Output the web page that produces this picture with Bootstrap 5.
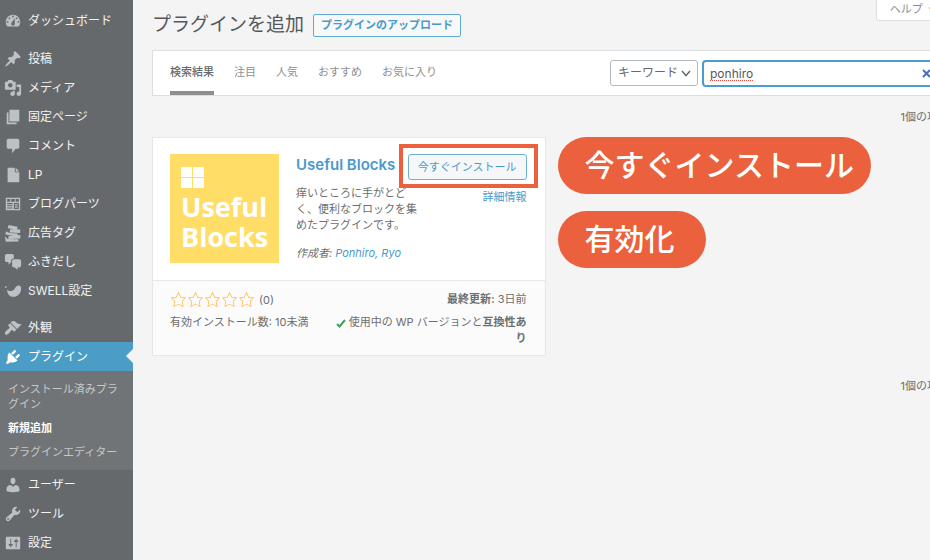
<!DOCTYPE html>
<html lang="ja">
<head>
<meta charset="utf-8">
<meta name="viewport" content="width=device-width, initial-scale=1">
<title>プラグインを追加</title>
<link href="https://cdn.jsdelivr.net/npm/bootstrap@5.3.0/dist/css/bootstrap.min.css" rel="stylesheet">
<style>
  body { font-family: Inter, "Noto Sans CJK JP", sans-serif; font-size: 11px; line-height: 16px; color: #6c6e70; background: #f4f4f4; }
  a { color: #4a9ac9; text-decoration: none; }
  .side { width: 133px; background: #65696c; padding-top: 6px; }
  .side .nav-link { height: 29px; padding: 0 0 0 4px; gap: 6px; font-size: 12px; color: #f2f3f4; }
  .side svg { width: 18px; height: 18px; fill: #bcc1c5; flex: none; }
  .side .gap-above { margin-top: 9px; }
  .side .gap-above-sm { margin-top: 8px; }
  .side .nav-link.current { background: #4b9dc6; color: #fff; position: relative; }
  .side .nav-link.current svg { fill: #fff; }
  .side .current::after { content: ""; position: absolute; right: 0; top: 7px; border: 7px solid transparent; border-right-color: #f4f4f4; border-left-width: 0; }
  .submenu { background: #707476; padding: 11px 8px 10px; line-height: 15px; gap: 9px; }
  .submenu a { color: #c6c9cb; }
  .submenu a.here { color: #fff; font-weight: 700; }
  .stage { padding-left: 19px; }
  .wide { margin-right: -21px; }
  .topline { height: 50px; gap: 9px; }
  h1 { font-size: 19px; line-height: 28px; color: #55585b; }
  .upload { font-size: 11px; line-height: 15px; font-weight: 700; color: #4a9ac9; border: 1px solid #62abd0; border-radius: 2px; padding: 3px 7px; background: #f7f8f8; }
  .help { position: absolute; top: -1px; right: -36px; height: 22px; padding: 0 30px 3px 13px; font-size: 11px; background: #fff; border: 1px solid #dcdfe1; border-radius: 0 0 3px 3px; color: #8b8d90; }
  .filter { background: #fff; border: 1px solid #dcdfe1; height: 46px; padding-left: 17px; }
  .tabs { gap: 20px; }
  .tabs a { color: #8d8f91; padding-top: 13px; border-bottom: 4px solid transparent; }
  .tabs a.on { color: #66686a; border-color: #8e8e8e; font-weight: 500; }
  .kind { width: 88px; height: 26px; font-size: 12px; line-height: 16px; padding: 0 20px 0 7px; border: 1px solid #b4b9be; border-radius: 3px; color: #66696c; background-color: #fff; appearance: none; }
  .kind-wrap svg { position: absolute; right: 7px; top: 10px; width: 10px; height: 7px; }
  .find { width: 248px; }
  .find input { height: 27px; font-size: 12px; line-height: 20px; padding: 0 6px; border: 2px solid #4b9dce; border-radius: 4px; color: #55585b; box-shadow: none; text-decoration: underline dotted 1px #ee4a42; text-underline-offset: 2px; text-decoration-skip-ink: none; }
  .find button { position: absolute; right: 19px; top: 9px; width: 10px; height: 10px; line-height: 0; }
  .tally { padding-right: 2px; }
  .tally-top { height: 41px; padding-top: 1px; }
  .tally-end { margin-top: 22px; }
  .results { --bs-gutter-x: 12px; }
  .plug { border: 1px solid #e6e7e8; background: #fff; }
  .plug-top { padding: 16px 18px 17px 17px; gap: 17px; }
  .plug-logo { width: 109px; height: 109px; background: #ffdd67; padding: 13px 0 0 11px; color: #fff; font: 700 27px/30px "Open Sans", sans-serif; flex: none; }
  .plug-logo svg { width: 23px; height: 21px; display: block; margin-bottom: 4px; }
  .plug-name { font-size: 15px; line-height: 22px; font-weight: 600; white-space: nowrap; }
  .plug-info { width: 124px; margin-top: 5px; }
  .plug-more { margin-top: 9px; }
  .install { display: block; font-size: 11px; line-height: 16px; color: #4a9ac9; border: 1px solid #6fafcf; border-radius: 3px; background: #f5f7f8; padding: 4px 9px; }
  .frame { position: absolute; inset: -10px -11px -8px -9px; border: 4px solid #ec613d; pointer-events: none; }
  .plug-foot { background: #fbfbfb; border-top: 1px solid #e6e7e8; padding: 10px 18px 9px 17px; }
  .plug-line { margin-bottom: 6px; }
  .stars svg { width: 17px; height: 17px; fill: #ffbf55; }
  .compat { width: 196px; }
  .calls { gap: 17px; }
  .call { background: #ec613d; color: #fff; border-radius: 29px; height: 57px; min-width: 148px; padding: 0 17px 0 27px; font-size: 30px; line-height: 57px; font-weight: 500; }
</style>
<script src="https://cdn.jsdelivr.net/npm/bootstrap@5.3.0/dist/js/bootstrap.bundle.min.js"></script>
</head>
<body>
<div class="d-flex min-vh-100 overflow-hidden">
  <nav class="side nav flex-column flex-nowrap flex-shrink-0" aria-label="管理メニュー">
    <a class="nav-link d-flex align-items-center" href="#"><svg viewBox="0 0 20 20"><path d="M3.76 16h12.48c1.1-1.37 1.76-3.11 1.76-5 0-4.42-3.58-8-8-8s-8 3.58-8 8c0 1.89.66 3.63 1.76 5zM10 4c.55 0 1 .45 1 1s-.45 1-1 1-1-.45-1-1 .45-1 1-1zM6 6c.55 0 1 .45 1 1s-.45 1-1 1-1-.45-1-1 .45-1 1-1zm8 0c.55 0 1 .45 1 1s-.45 1-1 1-1-.45-1-1 .45-1 1-1zm-5.37 5.55L12 7v6c0 1.1-.9 2-2 2s-2-.9-2-2c0-.57.24-1.08.63-1.45zM4 10c.55 0 1 .45 1 1s-.45 1-1 1-1-.45-1-1 .45-1 1-1zm12 0c.55 0 1 .45 1 1s-.45 1-1 1-1-.45-1-1 .45-1 1-1z" fill-rule="evenodd"/></svg>ダッシュボード</a>
    <a class="nav-link d-flex align-items-center gap-above" href="#"><svg viewBox="0 0 20 20"><path d="M10.44 3.02l1.82-1.82 6.36 6.35-1.83 1.82c-1.05-.68-2.48-.57-3.41.36l-.75.75c-.92.93-1.04 2.35-.35 3.41l-1.83 1.82-2.41-2.41-2.8 2.79c-.42.42-3.38 2.71-3.8 2.29s1.86-3.39 2.28-3.81l2.79-2.79L4.1 9.36l1.83-1.82c1.05.69 2.48.57 3.4-.36l.75-.75c.93-.92 1.05-2.35.36-3.41z"/></svg>投稿</a>
    <a class="nav-link d-flex align-items-center" href="#"><svg viewBox="0 0 20 20"><path fill-rule="evenodd" d="M13 11V4c0-.55-.45-1-1-1h-1.67L9 1H5L3.67 3H2c-.55 0-1 .45-1 1v7c0 .55.45 1 1 1h10c.55 0 1-.45 1-1zM7 4.500c1.380 0 2.500 1.120 2.500 2.500S8.380 9.500 7 9.500 4.500 8.380 4.500 7 5.620 4.500 7 4.500zM14 6h5v10.500c0 1.380-1.120 2.500-2.500 2.500S14 17.880 14 16.500s1.120-2.500 2.500-2.500c.17 0 .34.020.5.050V9h-3V6zm-4 8.050V13h2v3.500c0 1.380-1.120 2.500-2.500 2.500S7 17.880 7 16.500 8.120 14 9.500 14c.17 0 .34.020.5.050z"/></svg>メディア</a>
    <a class="nav-link d-flex align-items-center" href="#"><svg viewBox="0 0 20 20"><path d="M6 15V2h11v13H6zm-1 1h9v2H3V5h2v11z"/></svg>固定ページ</a>
    <a class="nav-link d-flex align-items-center" href="#"><svg viewBox="0 0 20 20"><path d="M5 2h10c1.100 0 2 .9 2 2v7c0 1.100-.9 2-2 2h-2l-4 5v-5H5c-1.100 0-2-.9-2-2V4c0-1.100.9-2 2-2z"/></svg>コメント</a>
    <a class="nav-link d-flex align-items-center" href="#"><svg viewBox="0 0 20 20"><path d="M4 2h8v5h5v11H4zM13 2l4 4h-4z"/></svg>LP</a>
    <a class="nav-link d-flex align-items-center" href="#"><svg viewBox="0 0 20 20"><path fill-rule="evenodd" d="M2 3h16v14H2zM3.500 4.500v3h3.500v-3zM8 4.500v3h4v-3zM13 4.500v3h3.500v-3zM3.500 9v1.200h6V9zM3.500 11.300v1.200h6v-1.200zM3.500 13.800V15h6v-1.200zM11 9v6.500h5.500V9zM12.200 10.200h3v1.500h-3zM12.200 12.800h3v1.500h-3z"/></svg>ブログパーツ</a>
    <a class="nav-link d-flex align-items-center" href="#"><svg viewBox="0 0 20 20"><path d="M5 1l10 2-.4 3.400L4.300 4.800zM7 5.800l11 .4V10L6.200 9.400zM2.200 8l4 2 9 .6-.5 3L1.500 11.800zM5 13l13-.8.3 3.800L5 16.600zM1 13.600l3 3 12 .3v2.600L2 19.600z"/></svg>広告タグ</a>
    <a class="nav-link d-flex align-items-center" href="#"><svg viewBox="0 0 20 20"><path d="M11 6h-.82C9.070 6 8 7.200 8 8.160V10l-3 3v-3H3c-1.100 0-2-.9-2-2V3c0-1.100.9-2 2-2h6c1.100 0 2 .9 2 2v3zm0 1h6c1.100 0 2 .9 2 2v5c0 1.100-.9 2-2 2h-2v3l-3-3h-1c-1.100 0-2-.9-2-2V9c0-1.100.9-2 2-2z"/></svg>ふきだし</a>
    <a class="nav-link d-flex align-items-center" href="#"><svg viewBox="0 0 20 20"><path d="M3.500 8.500C6 10.800 9 10.500 11 8.500c2-2.200 2.700-4.500 5.500-4.500 1.400 0 2.500 1.200 2.500 3.500 0 5-4 9-8.600 9-3.900 0-6.900-3-6.900-8zM1 5.500a1 1 0 112 0 1 1 0 01-2 0z"/></svg>SWELL設定</a>
    <a class="nav-link d-flex align-items-center gap-above-sm" href="#"><svg viewBox="0 0 20 20"><path d="M14.480 11.060L7.410 3.990l1.500-1.500c.5-.56 2.300-.47 3.510.32 1.210.8 1.430 1.280 2.910 2.100 1.180.64 2.450 1.260 4.450.85zm-.71.71L6.700 4.700 4.930 6.470c-.39.39-.39 1.020 0 1.410l1.060 1.060c.39.39.39 1.030 0 1.420-.6.6-1.430 1.110-2.210 1.690-.35.26-.7.53-1.010.84C1.430 14.230.4 16.080 1.400 17.070c.99 1 2.840-.03 4.180-1.360.31-.31.58-.66.85-1.020.57-.78 1.080-1.610 1.690-2.210.39-.39 1.020-.39 1.410 0l1.060 1.060c.39.39 1.020.39 1.410 0z"/></svg>外観</a>
    <a class="nav-link current d-flex align-items-center" href="#" aria-current="true"><svg viewBox="0 0 20 20"><path d="M13.110 4.360L9.870 7.600 8 5.730l3.240-3.240c.35-.34 1.050-.2 1.560.32.52.51.66 1.210.31 1.550zm-8 1.770l.91-1.120 9.010 9.010-1.190.84c-.71.71-2.630 1.160-3.820 1.160H6.140L4.900 17.260c-.59.59-1.540.59-2.120 0-.59-.58-.59-1.530 0-2.120l1.240-1.240v-3.880c0-1.130.4-3.190 1.090-3.890zm7.260 3.970l3.240-3.240c.34-.35 1.040-.21 1.550.31.52.51.66 1.210.31 1.550l-3.240 3.250z"/></svg>プラグイン</a>
    <div class="submenu d-flex flex-column">
      <a href="#">インストール済みプラグイン</a>
      <a class="here" href="#" aria-current="page">新規追加</a>
      <a class="text-nowrap" href="#">プラグインエディター</a>
    </div>
    <a class="nav-link d-flex align-items-center" href="#"><svg viewBox="0 0 20 20"><path d="M10 9.250c-2.270 0-2.730-3.440-2.730-3.440C7 4.020 7.820 2 9.970 2c2.160 0 2.980 2.020 2.710 3.810 0 0-.41 3.440-2.680 3.440zm0 2.570L12.720 10c2.390 0 4.520 2.330 4.520 4.530v2.490s-3.650 1.130-7.240 1.130c-3.650 0-7.240-1.130-7.240-1.130v-2.490c0-2.250 1.940-4.480 4.470-4.480z"/></svg>ユーザー</a>
    <a class="nav-link d-flex align-items-center" href="#"><svg viewBox="0 0 20 20"><path fill-rule="evenodd" d="M16.680 9.770c-1.340 1.340-3.300 1.670-4.950.99l-5.410 6.520c-.99.99-2.590.99-3.580 0s-.99-2.590 0-3.570l6.520-5.420c-.68-1.650-.35-3.610.99-4.950 1.280-1.280 3.120-1.620 4.720-1.060l-2.890 2.890 2.820 2.820 2.860-2.870c.53 1.580.18 3.390-1.080 4.650zM3.810 16.210c.4.390 1.040.390 1.430 0 .4-.4.4-1.040 0-1.430-.39-.4-1.030-.4-1.430 0-.39.39-.39 1.030 0 1.430z"/></svg>ツール</a>
    <a class="nav-link d-flex align-items-center" href="#"><svg viewBox="0 0 20 20"><path fill-rule="evenodd" d="M18 16V4c0-.55-.45-1-1-1H3c-.55 0-1 .45-1 1v12c0 .55.45 1 1 1h14c.55 0 1-.45 1-1zM8 11h1c.55 0 1 .45 1 1s-.45 1-1 1H8v1.500c0 .28-.22.5-.5.5s-.5-.22-.5-.5V13H6c-.55 0-1-.45-1-1s.45-1 1-1h1V5.500c0-.28.22-.5.5-.5s.5.22.5.5V11zm5-2h-1c-.55 0-1-.45-1-1s.45-1 1-1h1V5.500c0-.28.22-.5.5-.5s.5.22.5.5V7h1c.55 0 1 .45 1 1s-.45 1-1 1h-1v5.500c0 .28-.22.5-.5.5s-.5-.22-.5-.5V9z"/></svg>設定</a>
  </nav>

  <main class="stage flex-grow-1 position-relative overflow-hidden">
    <button class="help" type="button">ヘルプ&nbsp; ▾</button>
    <div class="topline d-flex align-items-center">
      <h1 class="m-0 fw-normal">プラグインを追加</h1>
      <button class="upload" type="button">プラグインのアップロード</button>
    </div>

    <div class="wide">
      <div class="filter d-flex justify-content-between">
        <div class="tabs d-flex text-nowrap">
          <a class="on" href="#">検索結果</a><a href="#">注目</a><a href="#">人気</a><a href="#">おすすめ</a><a href="#">お気に入り</a>
        </div>
        <form class="d-flex align-items-center gap-1">
          <div class="kind-wrap position-relative">
            <select class="kind d-block" aria-label="検索の種類"><option>キーワード</option><option>作成者</option><option>タグ</option></select>
            <svg viewBox="0 0 10 7" fill="none" stroke="#66696c" stroke-width="1.500"><path d="M1 1l4 4.500L9 1"/></svg>
          </div>
          <div class="find position-relative">
            <input class="form-control" type="text" value="ponhiro" aria-label="プラグインを検索" spellcheck="false">
            <button class="border-0 bg-transparent p-0" type="button" aria-label="消去"><svg width="9" height="9" viewBox="0 0 9 9" stroke="#4671b5" stroke-width="2"><path d="M1 1l7 7M8 1L1 8"/></svg></button>
          </div>
        </form>
      </div>

      <div class="tally tally-top d-flex align-items-center justify-content-end">1個の項目</div>

      <div class="results row">
        <div class="col-6">
          <article class="plug">
            <div class="plug-top d-flex">
              <div class="plug-logo"><svg viewBox="0 0 23 21" fill="#fff"><path d="M0 0h11v10H0zM12 0h11v10H12zM0 11h11v10H0zM12 11h11v10H12z"/></svg>Useful<br>Blocks</div>
              <div class="flex-grow-1">
                <div class="d-flex justify-content-between">
                  <h2 class="plug-name mb-0"><a href="#">Useful Blocks</a></h2>
                  <div class="position-relative text-nowrap">
                    <button class="install" type="button">今すぐインストール</button>
                    <span class="frame"></span>
                  </div>
                </div>
                <div class="d-flex justify-content-between align-items-start">
                  <div class="plug-info">
                    <p class="mb-0">痒いところに手がとどく、便利なブロックを集めたプラグインです。</p>
                    <p class="mb-0 fst-italic text-nowrap mt-2 pt-1">作成者: <a href="#">Ponhiro, Ryo</a></p>
                  </div>
                  <a class="plug-more text-nowrap" href="#">詳細情報</a>
                </div>
              </div>
            </div>
            <div class="plug-foot">
              <div class="plug-line d-flex justify-content-between">
                <div class="stars d-flex align-items-center">
                  <svg viewBox="0 0 20 20"><path id="star" d="M10 1L7 7l-6 .75 4.130 4.620L4 19l6-3 6 3-1.120-6.630L19 7.750 13 7zm0 2.240l2.340 4.690 4.650.58-3.180 3.560.87 5.150L10 14.880l-4.680 2.340.87-5.150-3.180-3.560 4.650-.58z"/></svg><svg viewBox="0 0 20 20"><use href="#star"/></svg><svg viewBox="0 0 20 20"><use href="#star"/></svg><svg viewBox="0 0 20 20"><use href="#star"/></svg><svg viewBox="0 0 20 20"><use href="#star"/></svg>
                  <span class="ms-1">(0)</span>
                </div>
                <div><strong>最終更新:</strong> 3日前</div>
              </div>
              <div class="d-flex justify-content-between">
                <div class="text-nowrap">有効インストール数: 10未満</div>
                <div class="compat text-end"><svg width="10" height="9" viewBox="0 0 10 9" fill="none" stroke="#3fa45b" stroke-width="2"><path d="M1 5l2.500 2.500L9 1"/></svg> 使用中の WP バージョンと<strong>互換性あり</strong></div>
              </div>
            </div>
          </article>
        </div>
        <div class="col-6">
          <div class="calls d-flex flex-column align-items-start text-nowrap">
            <div class="call">今すぐインストール</div>
            <div class="call">有効化</div>
          </div>
        </div>
      </div>

      <div class="tally tally-end d-flex justify-content-end">1個の項目</div>
    </div>
  </main>
</div>
</body>
</html>
